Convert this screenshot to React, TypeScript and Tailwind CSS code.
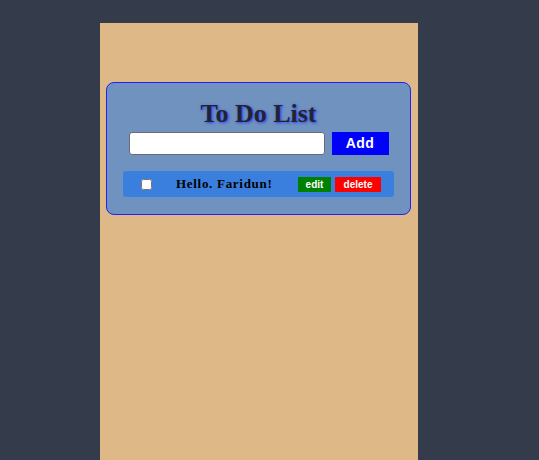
import React from "react";

const App = () => {
    return (
        <div className="min-h-[460px] w-full bg-[#343b4b] pt-[23px]">
            <div className="ml-[100px] w-[318px] h-[437px] bg-[#deb887] pt-[59px]">
                {/* Card */}
                <div className="mx-[6px] w-[305px] rounded-[8px] border border-[#2020ff] bg-[#7092bf] pt-[16px] pb-[17px]">
                    <h1
                        className="text-center text-[26px] leading-[30px] font-bold text-[#232330] [font-family:'Liberation_Serif',serif] [text-shadow:1px_1px_3px_#2040ff]"
                    >
                        To Do List
                    </h1>

                    {/* Input row */}
                    <div className="mt-[3px] flex justify-center gap-[7px]">
                        <input
                            type="text"
                            className="w-[196px] h-[23px] rounded-[3px] border border-[#6b6b78] bg-white"
                        />
                        <button className="w-[57px] h-[23px] bg-[#0000ff] text-white text-[14px] font-bold tracking-[0.5px] [font-family:'Liberation_Sans',sans-serif]">
                            Add
                        </button>
                    </div>

                    {/* Item */}
                    <div className="mx-[16px] mt-[16px] h-[26px] flex items-center rounded-[3px] bg-[#3a7fdd] pl-[18px] pr-[13px]">
                        <input type="checkbox" className="w-[11px] h-[11px] m-0" />
                        <span className="ml-[24px] text-[13px] font-bold tracking-[0.7px] text-black [font-family:'Liberation_Serif',serif]">
                            Hello. Faridun!
                        </span>
                        <div className="ml-auto flex gap-[4px]">
                            <button className="w-[33px] h-[15px] bg-[#008000] text-white text-[10px] font-bold leading-[15px] [font-family:'Liberation_Sans',sans-serif]">
                                edit
                            </button>
                            <button className="w-[46px] h-[15px] bg-[#ff0000] text-white text-[10px] font-bold leading-[15px] [font-family:'Liberation_Sans',sans-serif]">
                                delete
                            </button>
                        </div>
                    </div>
                </div>
            </div>
        </div>
    );
};

export default App;
